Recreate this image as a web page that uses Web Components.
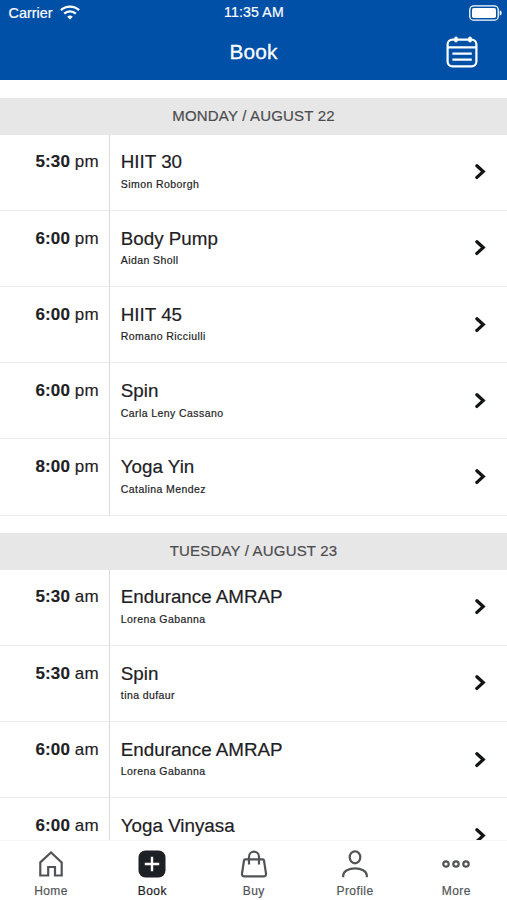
<!DOCTYPE html>
<html lang="en">
<head>
<meta charset="utf-8">
<title>Book</title>
<style>
html,body{margin:0;height:100%;overflow:hidden}
body{font-family:"Liberation Sans",Arial,sans-serif;color:#1e2124;background:#fff}
</style>
</head>
<body>
<booking-app>
  <app-header slot="header">Book</app-header>
  <schedule-day label="MONDAY / AUGUST 22">
    <class-row time="5:30" period="pm" coach="Simon Roborgh">HIIT 30</class-row>
    <class-row time="6:00" period="pm" coach="Aidan Sholl">Body Pump</class-row>
    <class-row time="6:00" period="pm" coach="Romano Ricciulli">HIIT 45</class-row>
    <class-row time="6:00" period="pm" coach="Carla Leny Cassano">Spin</class-row>
    <class-row time="8:00" period="pm" coach="Catalina Mendez">Yoga Yin</class-row>
  </schedule-day>
  <schedule-day label="TUESDAY / AUGUST 23">
    <class-row time="5:30" period="am" coach="Lorena Gabanna">Endurance AMRAP</class-row>
    <class-row time="5:30" period="am" coach="tina dufaur">Spin</class-row>
    <class-row time="6:00" period="am" coach="Lorena Gabanna">Endurance AMRAP</class-row>
    <class-row time="6:00" period="am" coach="">Yoga Vinyasa</class-row>
  </schedule-day>
  <tab-bar slot="tabs">
    <tab-item icon="home">Home</tab-item>
    <tab-item icon="book" active>Book</tab-item>
    <tab-item icon="buy">Buy</tab-item>
    <tab-item icon="profile">Profile</tab-item>
    <tab-item icon="more">More</tab-item>
  </tab-bar>
</booking-app>
<script>
class Base extends HTMLElement{
  constructor(){super();this.attachShadow({mode:'open'})}
  connectedCallback(){this.shadowRoot.innerHTML=this.render()}
}
customElements.define('booking-app',class extends Base{render(){return `
<style>
:host{display:flex;flex-direction:column;height:100vh;overflow:hidden}
main{flex:1;min-height:0;overflow:hidden;padding-top:18.3px;box-sizing:border-box}
</style><slot name="header"></slot><main><slot></slot></main><slot name="tabs"></slot>`}});

customElements.define('status-bar',class extends Base{render(){return `
<style>
:host{display:grid;grid-template-columns:1fr auto 1fr;align-items:center;height:25px;padding:0 5px 0 8.5px;font-size:14.1px;-webkit-text-stroke:.2px}
.left{display:flex;align-items:center;gap:8px;font-size:14.4px}
.time{letter-spacing:.15px;margin:0 0 2px -2.6px}
.battery{justify-self:end}
svg{display:block}
</style>
<div class="left"><span>Carrier</span>
<svg width="20" height="15" viewBox="0 0 20 15" fill="none" stroke="#fff" stroke-width="2.3"><path d="M.9 5.2C6 .4 14 .4 19.1 5.2M4.2 8.7C7.5 5.6 12.5 5.6 15.8 8.7"/><path d="M10 14.4 7.2 11.7Q10 9.4 12.8 11.7Z" fill="#fff" stroke="none"/></svg></div>
<span class="time">11:35 AM</span>
<svg class="battery" width="33" height="16" viewBox="0 0 33 16"><rect x=".8" y=".8" width="28.4" height="14.4" rx="3.8" fill="none" stroke="#fff" stroke-width="1.3"/><rect x="3" y="3" width="24" height="10" rx="1.8" fill="#fff"/><path d="M30.7 5.2q2 .8 2 2.8t-2 2.8z" fill="#fff"/></svg>`}});

customElements.define('app-header',class extends Base{render(){return `
<style>
:host{display:block;height:80px;background:#0050a8;color:#fff;flex:none}
.bar{display:grid;grid-template-columns:1fr auto 1fr;align-items:center;height:54px;padding:0 29px}
h1{font-size:20.8px;font-weight:400;margin:0;letter-spacing:.1px;grid-column:2;-webkit-text-stroke:.3px}
svg{display:block;grid-column:3;justify-self:end}
</style>
<status-bar></status-bar>
<div class="bar"><h1><slot></slot></h1>
<svg width="32" height="32" viewBox="0 0 32 32" fill="none" stroke="#fff" stroke-width="2.2"><rect x="1.6" y="3.6" width="28.8" height="26.8" rx="4.8"/><path d="M2 11.3H30M6.4 17.6H25.8M6.4 23.7H25.8"/><path d="M10 2.2V4.8M24 2.2V4.8" stroke-width="3.6" stroke-linecap="round"/></svg></div>`}});

customElements.define('schedule-day',class extends Base{render(){return `
<style>
:host{display:block;margin-bottom:17.6px}
h2{margin:0;height:36.4px;line-height:36.2px;background:#e7e7e7;color:#4c4c4e;font-size:15px;letter-spacing:.18px;font-weight:400;text-align:center;-webkit-text-stroke:.2px}
</style><h2>${this.getAttribute('label')}</h2><slot></slot>`}});

customElements.define('class-row',class extends Base{render(){return `
<style>
:host{display:grid;grid-template-columns:110px 1fr auto;height:76.2px;box-sizing:border-box;border-bottom:1px solid #ececec}
.time{border-right:1px solid #d9dcdc;text-align:right;padding:16.8px 10.3px 0 0;font-size:17px;line-height:22px;letter-spacing:.12px;white-space:nowrap;-webkit-text-stroke:.15px}
.info{padding:16.8px 0 0 10.8px}
.name{font-size:18.8px;line-height:22px;-webkit-text-stroke:.2px}
.coach{font-size:10.5px;line-height:14px;margin-top:3.5px;letter-spacing:.42px;-webkit-text-stroke:.2px}
svg{display:block;align-self:center;margin-right:20px}
</style>
<div class="time"><b>${this.getAttribute('time')}</b> ${this.getAttribute('period')}</div>
<div class="info"><div class="name"><slot></slot></div><div class="coach">${this.getAttribute('coach')}</div></div>
<svg width="13" height="16" viewBox="0 0 13 16" fill="none" stroke="#121416" stroke-width="3.3" stroke-linecap="round"><path d="M2.9 1.8 9.2 7.6 2.9 13.4"/></svg>`}});

customElements.define('tab-bar',class extends Base{render(){return `
<style>:host{display:grid;grid-template-columns:repeat(5,1fr);height:60px;padding-left:.4px;box-sizing:border-box;background:#fff;border-top:1px solid #f5f5f5;flex:none}</style><slot></slot>`}});

const icons={
home:'<path d="M3.3 12.4 14 2.5 24.7 12.4V25.5H18V17H11.2V25.5H3.3Z"/>',
book:'<rect x=".5" y=".5" width="27" height="27" rx="7" fill="#1d2024" stroke="none"/><path d="M14 6.8V21.2M6.8 14H21.2" stroke="#fff" stroke-width="2.4"/>',
buy:'<path d="M5.2 9.3H22.8Q23.8 9.3 24 10.5L26 23.5Q26.3 26.4 23.5 26.4H4.5Q1.7 26.4 2 23.5L4 10.5Q4.2 9.3 5.2 9.3Z"/><path d="M9 14.5V6.8C9 0 19 0 19 6.8V14.5"/>',
profile:'<ellipse cx="14" cy="7.3" rx="5.3" ry="6"/><path d="M2.2 27.3V25.5C2.2 16 25.8 16 25.8 25.5V27.3"/>',
more:'<circle cx="4" cy="14" r="2.7"/><circle cx="14" cy="14" r="2.7"/><circle cx="24" cy="14" r="2.7"/>'};
customElements.define('tab-item',class extends Base{render(){return `
<style>
:host{display:flex;flex-direction:column;align-items:center;padding-top:9px;color:#515457;font-size:12px;letter-spacing:.42px;-webkit-text-stroke:.2px}
:host([active]){color:#1d2024}
svg{display:block;stroke:#515457}
span{line-height:16px;margin-top:5px}
</style>
<svg width="28" height="28" viewBox="0 0 28 28" fill="none" stroke-width="2.2">${icons[this.getAttribute('icon')]}</svg>
<span><slot></slot></span>`}});
</script>
</body>
</html>
